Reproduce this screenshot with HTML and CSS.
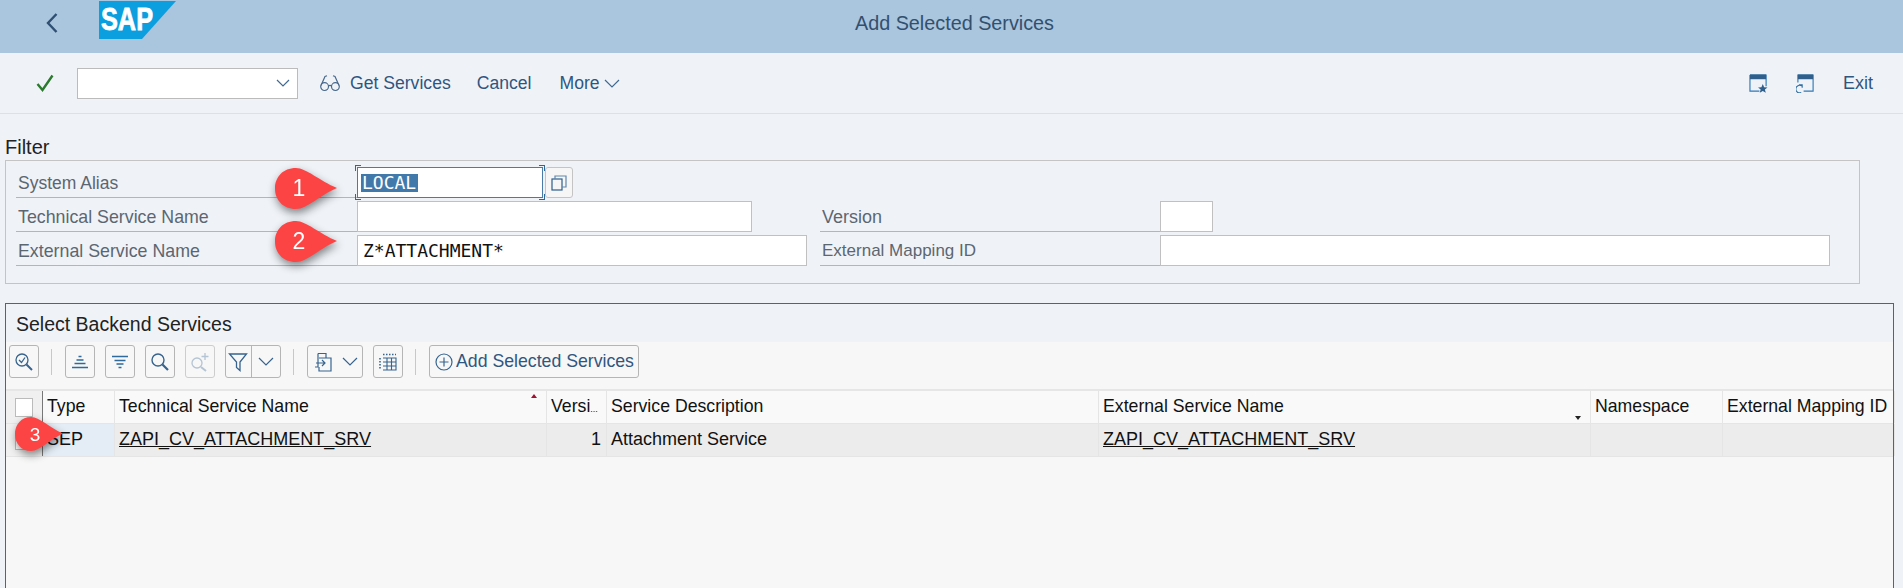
FILE: index.html
```html
<!DOCTYPE html>
<html>

<head>
    <title>Add Selected Services</title>
    <link rel="stylesheet" href="styles.css">
</head>

<body>
    <header class="title-bar">
        <svg class="back-icon" viewBox="0 0 12 20" width="12" height="20">
            <path d="M10.5 1 L2 10 L10.5 19" fill="none" stroke="#2f4f73" stroke-width="2.4" />
        </svg>
        <svg class="sap-logo" viewBox="0 0 77 38" width="77" height="38">
            <polygon points="0,0 77,0 43,38 0,38" fill="#0b9fe0" />
            <text x="2" y="29" class="sap-text" textLength="52" lengthAdjust="spacingAndGlyphs">SAP</text>
        </svg>
        <div class="title-text">Add Selected Services</div>
    </header>

    <div class="toolbar">
        <svg class="check-icon" viewBox="0 0 18 18" width="18" height="18">
            <path d="M1.5 10 L6.5 16 L16.5 1.5" fill="none" stroke="#2b7a2e" stroke-width="2.4" />
        </svg>
        <div class="command-box">
            <svg viewBox="0 0 14 8" width="14" height="8">
                <path d="M1 1 L7 7 L13 1" fill="none" stroke="#3f6a94" stroke-width="1.2" />
            </svg>
        </div>
        <svg class="glasses-icon" viewBox="0 0 20 18" width="20" height="18">
            <g fill="none" stroke="#47688c" stroke-width="1.2">
                <circle cx="4.6" cy="12.6" r="3.9" />
                <circle cx="15.4" cy="12.6" r="3.9" />
                <path d="M8.4 12 Q10 10.8 11.6 12" />
                <path d="M1 11.5 L5 2.5 L7 1.8" />
                <path d="M19 11.5 L15 2.5 L13 1.8" />
            </g>
        </svg>
        <span class="tool-link get-services">Get Services</span>
        <span class="tool-link cancel">Cancel</span>
        <span class="tool-link more">More</span>
        <svg class="more-chevron" viewBox="0 0 16 9" width="16" height="9">
            <path d="M1 1 L8 8 L15 1" fill="none" stroke="#3f6a94" stroke-width="1.2" />
        </svg>
        <svg class="window-icon star-window" viewBox="0 0 20 20" width="19" height="19">
            <path d="M1 1 H18 V13 M1 1 V18 H11" fill="none" stroke="#2f78b8" stroke-width="1.2" />
            <rect x="1" y="0.5" width="17" height="5" fill="#2f5f8a" />
            <polygon points="14.5,10.5 15.9,14 19.5,14.2 16.7,16.3 17.7,19.7 14.5,17.8 11.3,19.7 12.3,16.3 9.5,14.2 13.1,14" fill="#2f5f8a" />
        </svg>
        <svg class="window-icon" viewBox="0 0 20 20" width="19" height="19">
            <path d="M2 9 V1 H18 V18 H8" fill="none" stroke="#2f78b8" stroke-width="1.2" />
            <rect x="2" y="0.5" width="16" height="5" fill="#2f5f8a" />
            <path d="M6 12.5 A4 4 0 1 0 5.5 19.5 M3 11.5 H6.5 V14.5" fill="none" stroke="#2f6ea5" stroke-width="1.2" />
        </svg>
        <span class="tool-link exit">Exit</span>
    </div>

    <main class="content">
        <div class="section-title">Filter</div>
        <section class="filter-box">
            <div class="filter-row">
                <label class="field-label alias-label">System Alias</label>
                <div class="alias-field">
                    <span class="selected-text">LOCAL</span>
                    <i class="corner top-left"></i>
                    <i class="corner top-right"></i>
                    <i class="corner bottom-left"></i>
                    <i class="corner bottom-right"></i>
                </div>
                <button class="copy-button">
                    <svg viewBox="0 0 16 16" width="16" height="16">
                        <rect x="1" y="4" width="10" height="11" fill="none" stroke="#2f5f8a" stroke-width="1.2" />
                        <path d="M4 4 V1 H15 V12 H11" fill="none" stroke="#5f87ad" stroke-width="1.2" />
                    </svg>
                </button>
            </div>
            <div class="filter-row">
                <label class="field-label">Technical Service Name</label>
                <div class="field tech-field"></div>
                <label class="field-label right-label version-label">Version</label>
                <div class="field version-field"></div>
            </div>
            <div class="filter-row">
                <label class="field-label">External Service Name</label>
                <div class="field ext-field">Z*ATTACHMENT*</div>
                <label class="field-label right-label mapping-label">External Mapping ID</label>
                <div class="field mapping-field"></div>
            </div>
        </section>

        <section class="backend-panel">
            <div class="panel-title">Select Backend Services</div>
            <div class="table-tools">
                <button class="icon-btn first-btn">
                    <svg viewBox="0 0 20 20" width="20" height="20">
                        <g fill="none" stroke="#36648f" stroke-width="1.3">
                            <circle cx="8" cy="8" r="6" />
                            <path d="M5 8 L7.5 10.5 L11 5.5" />
                            <path d="M12.5 12.5 L18 18" stroke-width="2" />
                        </g>
                    </svg>
                </button>
                <span class="tool-sep"></span>
                <button class="icon-btn">
                    <svg viewBox="0 0 20 20" width="20" height="20">
                        <path d="M8.5 4.5 H11.5 M6.5 8 H13.5 M4.5 11.5 H15.5 M2 15.5 H18" fill="none" stroke="#2f6a9c" stroke-width="1.3" />
                    </svg>
                </button>
                <button class="icon-btn">
                    <svg viewBox="0 0 20 20" width="20" height="20">
                        <path d="M2 4.5 H18 M4.5 8.5 H15.5 M6.5 12 H13.5 M8.5 15.5 H11.5" fill="none" stroke="#2f6a9c" stroke-width="1.3" />
                    </svg>
                </button>
                <button class="icon-btn">
                    <svg viewBox="0 0 20 20" width="20" height="20">
                        <g fill="none" stroke="#36648f" stroke-width="1.4">
                            <circle cx="8" cy="8" r="6" />
                            <path d="M12.5 12.5 L18 18" stroke-width="2.2" />
                        </g>
                    </svg>
                </button>
                <button class="icon-btn disabled-btn">
                    <svg viewBox="0 0 20 20" width="20" height="20">
                        <g fill="none" stroke="#b4c4d4" stroke-width="1.3">
                            <circle cx="7" cy="11" r="5" />
                            <path d="M11 15 L16 19" stroke-width="2" />
                            <path d="M15 1 V8 M11.5 4.5 H18.5" />
                        </g>
                    </svg>
                </button>
                <div class="split-btn filter-split">
                    <span>
                        <svg viewBox="0 0 20 20" width="20" height="20">
                            <path d="M1.5 2 H18.5 L12 10 V18.5 L8.5 15.5 V10 Z" fill="none" stroke="#36648f" stroke-width="1.3" />
                        </svg>
                    </span>
                    <span class="split-part">
                        <svg viewBox="0 0 16 9" width="16" height="9">
                            <path d="M1 1 L8 8 L15 1" fill="none" stroke="#36648f" stroke-width="1.2" />
                        </svg>
                    </span>
                </div>
                <span class="tool-sep"></span>
                <div class="split-btn export-split">
                    <span>
                        <svg viewBox="0 0 20 20" width="20" height="20">
                            <g fill="none" stroke="#36648f" stroke-width="1.2">
                                <path d="M5 1.5 H13 V6 M5 1.5 V15 H2" />
                                <path d="M6 6 H18 V19 H6 V15" />
                                <path d="M3 11 H12 M9 8 L12 11 L9 14" />
                            </g>
                        </svg>
                    </span>
                    <span>
                        <svg viewBox="0 0 16 9" width="16" height="9">
                            <path d="M1 1 L8 8 L15 1" fill="none" stroke="#36648f" stroke-width="1.2" />
                        </svg>
                    </span>
                </div>
                <button class="icon-btn">
                    <svg viewBox="0 0 20 20" width="20" height="20">
                        <g fill="none" stroke="#36648f" stroke-width="1.1">
                            <path d="M5 6 H18 V18 H5 M5 10 H18 M5 14 H18 M9 6 V18 M13.5 6 V18" />
                            <path d="M2 6 V18" stroke-dasharray="1.5 1.5" stroke-width="1.6" />
                            <path d="M5 2.5 H18" stroke-dasharray="1.5 1.5" stroke-width="1.6" />
                        </g>
                    </svg>
                </button>
                <span class="tool-sep"></span>
                <button class="add-btn">
                    <svg viewBox="0 0 18 18" width="18" height="18">
                        <g fill="none" stroke="#36648f" stroke-width="1.2">
                            <circle cx="9" cy="9" r="8" />
                            <path d="M9 4.5 V13.5 M4.5 9 H13.5" />
                        </g>
                    </svg>
                    Add Selected Services
                </button>
            </div>

            <div class="services-table">
                <div class="table-row head-row">
                    <div class="cell select-cell"><span class="checkbox"></span></div>
                    <div class="cell">Type</div>
                    <div class="cell sorted-up">Technical Service Name</div>
                    <div class="cell">Versi<small>...</small></div>
                    <div class="cell">Service Description</div>
                    <div class="cell sorted-down">External Service Name</div>
                    <div class="cell">Namespace</div>
                    <div class="cell">External Mapping ID</div>
                </div>
                <div class="table-row data-row">
                    <div class="cell select-cell"><span class="checkbox"></span></div>
                    <div class="cell type-cell">SEP</div>
                    <div class="cell link-cell">ZAPI_CV_ATTACHMENT_SRV</div>
                    <div class="cell num-cell">1</div>
                    <div class="cell">Attachment Service</div>
                    <div class="cell link-cell">ZAPI_CV_ATTACHMENT_SRV</div>
                    <div class="cell"></div>
                    <div class="cell"></div>
                </div>
            </div>
        </section>
    </main>

    <!-- callouts sit on top of the screen -->
    <div class="callout callout-one">
        <svg viewBox="0 0 62 41" width="62" height="41">
            <path d="M21 0 C31 0 45 13 62 20 C45 27 32 41 21 41 C8 41 0 32 0 20.5 C0 9 8 0 21 0 Z" fill="#fc4444" />
        </svg>
        <span>1</span>
    </div>
    <div class="callout callout-two">
        <svg viewBox="0 0 62 41" width="62" height="41">
            <path d="M21 0 C31 0 45 13 62 20 C45 27 32 41 21 41 C8 41 0 32 0 20.5 C0 9 8 0 21 0 Z" fill="#fc4444" />
        </svg>
        <span>2</span>
    </div>
    <div class="callout callout-three">
        <svg viewBox="0 0 62 41" width="48" height="34" preserveAspectRatio="none">
            <path d="M21 0 C31 0 45 13 62 20 C45 27 32 41 21 41 C8 41 0 32 0 20.5 C0 9 8 0 21 0 Z" fill="#fc4444" />
        </svg>
        <span>3</span>
    </div>
</body>

</html>
```

FILE: styles.css
```css
html,
body {
    margin: 0;
    height: 100%;
    overflow: hidden;
}

body {
    position: relative;
    background-color: #eff3f8;
    font-family: "Liberation Sans", Arial, sans-serif;
    font-size: 16px;
    color: #222;
}

button {
    font-family: inherit;
    padding: 0;
    margin: 0;
    cursor: pointer;
}

/* top blue bar */
.title-bar {
    display: flex;
    align-items: flex-start;
    height: 53px;
    background-color: #aac5de;
    position: relative;
}

.back-icon {
    margin: 13px 0 0 46px;
}

.sap-logo {
    margin: 1px 0 0 41px;
}

.sap-text {
    font-family: "Liberation Sans", Arial, sans-serif;
    font-size: 31px;
    font-weight: bold;
    fill: #fff;
    stroke: #fff;
    stroke-width: 0.8px;
}

.title-text {
    flex: 1;
    text-align: center;
    line-height: 46px;
    font-size: 19.8px;
    color: #32506e;
    margin-left: -170px;
}

/* command toolbar */
.toolbar {
    display: flex;
    align-items: center;
    height: 60px;
    border-bottom: 1px solid #d8e1ec;
}

.check-icon {
    margin-left: 36px;
}

.command-box {
    display: flex;
    align-items: center;
    justify-content: flex-end;
    box-sizing: border-box;
    width: 221px;
    height: 31px;
    margin-left: 23px;
    padding-right: 7px;
    background-color: #fff;
    border: 1px solid #bbb;
}

.glasses-icon {
    margin-left: 22px;
}

.tool-link {
    color: #30567f;
    font-size: 17.6px;
}

.get-services {
    margin-left: 10px;
}

.cancel {
    margin-left: 26px;
}

.more {
    margin-left: 28px;
}

.more-chevron {
    margin-left: 4px;
}

.star-window {
    margin-left: auto;
}

.window-icon+.window-icon {
    margin-left: 28px;
}

.exit {
    margin: 0 30px 0 28px;
    font-size: 18px;
}

/* filter area */
.content {
    padding: 0 9px 0 5px;
}

.section-title {
    font-size: 20px;
    line-height: 24px;
    margin-top: 21px;
}

.filter-box {
    box-sizing: border-box;
    height: 124px;
    margin: 1px 34px 0 0;
    padding: 6px 10px 0 10px;
    border: 1px solid #c4c4c4;
}

.filter-row {
    display: flex;
    height: 31px;
    margin-bottom: 3px;
}

.field-label {
    box-sizing: border-box;
    width: 341px;
    height: 31px;
    padding-left: 2px;
    font-size: 17.8px;
    line-height: 32px;
    color: #5c6670;
    border-bottom: 1px solid #b5b5b5;
    white-space: nowrap;
}

.alias-label {
    font-size: 17.5px;
}

.right-label {
    width: 340px;
    margin-left: 14px;
}

.version-label {
    font-size: 18px;
}

.mapping-label {
    margin-left: 13px;
    font-size: 17px;
}

.field {
    box-sizing: border-box;
    height: 31px;
    padding-left: 5px;
    background-color: #fff;
    border: 1px solid #c0c0c0;
    font-family: "DejaVu Sans Mono", monospace;
    font-size: 18px;
    line-height: 29px;
    color: #111;
}

.tech-field {
    width: 395px;
    margin-right: 54px;
}

.ext-field {
    width: 450px;
}

.version-field {
    width: 53px;
}

.mapping-field {
    width: 670px;
}

.alias-field {
    position: relative;
    box-sizing: border-box;
    width: 186px;
    height: 31px;
    padding: 6px 0 0 3px;
    background-color: #fff;
    border: 1px solid #4a7ba6;
    font-family: "DejaVu Sans Mono", monospace;
    font-size: 18px;
    line-height: 18px;
}

.selected-text {
    display: inline-block;
    padding: 0 2px 0 1px;
    background-color: #4279ab;
    color: #fff;
}

.corner {
    position: absolute;
    width: 5px;
    height: 5px;
    border: 0 solid #2f6796;
}

.top-left {
    top: -3px;
    left: -3px;
    border-width: 1px 0 0 1px;
}

.top-right {
    top: -3px;
    right: -3px;
    border-width: 1px 1px 0 0;
}

.bottom-left {
    bottom: -3px;
    left: -3px;
    border-width: 0 0 1px 1px;
}

.bottom-right {
    bottom: -3px;
    right: -3px;
    border-width: 0 1px 1px 0;
}

.copy-button {
    box-sizing: border-box;
    width: 28px;
    height: 31px;
    margin-left: 2px;
    background-color: #f6f6f6;
    border: 1px solid #c4c4c4;
    border-radius: 3px;
    display: flex;
    align-items: center;
    justify-content: center;
}

/* backend services panel */
.backend-panel {
    box-sizing: border-box;
    height: 285px;
    margin: 19px 0 0 0;
    background-color: #f7f7f7;
    border: 1px solid #3a6a96;
    border-bottom: none;
}

.panel-title {
    height: 38px;
    padding-left: 10px;
    line-height: 40px;
    font-size: 19.5px;
    color: #222;
    background-color: #eff3f8;
}

.table-tools {
    display: flex;
    align-items: center;
    height: 47px;
    padding: 0 0 8px 3px;
    box-sizing: border-box;
}

.icon-btn {
    box-sizing: border-box;
    display: flex;
    align-items: center;
    justify-content: center;
    width: 30px;
    height: 33px;
    margin-right: 10px;
    background-color: #f7f7f7;
    border: 1px solid #b5b5b5;
    border-radius: 3px;
}

.disabled-btn {
    border-color: #cdcdcd;
}

.tool-sep {
    width: 1px;
    height: 26px;
    margin: 0 13px 0 2px;
    background-color: #c8c8c8;
}

.split-btn {
    box-sizing: border-box;
    display: flex;
    height: 33px;
    margin-right: 10px;
    border: 1px solid #b5b5b5;
    border-radius: 3px;
}

.split-btn span {
    display: flex;
    align-items: center;
    justify-content: center;
}

.filter-split {
    width: 56px;
}

.filter-split span {
    width: 25px;
}

.filter-split .split-part {
    width: 29px;
    border-left: 1px solid #b5b5b5;
}

.export-split {
    width: 56px;
}

.export-split span {
    width: 30px;
}

.export-split span+span {
    width: 24px;
}

.add-btn {
    box-sizing: border-box;
    display: flex;
    align-items: center;
    gap: 3px;
    width: 210px;
    height: 33px;
    padding-left: 5px;
    background-color: #f7f7f7;
    border: 1px solid #b5b5b5;
    border-radius: 3px;
    color: #30567f;
    font-size: 17.7px;
    white-space: nowrap;
}

/* table */
.services-table {
    border-top: 2px solid #e6e6e6;
}

.table-row {
    display: grid;
    grid-template-columns: 37px 72px 432px 60px 492px 492px 132px 172px;
    border-bottom: 1px solid #e5e5e5;
}

.head-row {
    height: 32px;
    background-color: #f9f9f9;
}

.head-row .cell {
    font-size: 17.7px;
    line-height: 31px;
}

.data-row {
    height: 32px;
    background-color: #ececec;
}

.cell {
    position: relative;
    box-sizing: border-box;
    padding-left: 4px;
    font-size: 18px;
    line-height: 30px;
    white-space: nowrap;
    overflow: hidden;
    color: #111;
    border-right: 1px solid #e5e5e5;
}

.cell small {
    font-size: 9px;
}

.select-cell {
    display: flex;
    align-items: center;
    justify-content: center;
    padding: 0 1px 0 0;
    background-color: #f0f0f0;
    border-right: 1px solid #777;
}

.checkbox {
    box-sizing: border-box;
    width: 18px;
    height: 19px;
    background-color: #fff;
    border: 1px solid #bbb;
}

.type-cell {
    background-color: #e4edf6;
}

.link-cell {
    text-decoration: underline;
}

.num-cell {
    padding-right: 5px;
    text-align: right;
}

.sorted-up::after,
.sorted-down::after {
    content: "";
    position: absolute;
    right: 9px;
    border-left: 3px solid transparent;
    border-right: 3px solid transparent;
}

.sorted-up::after {
    top: 3px;
    border-bottom: 4px solid #a01030;
}

.sorted-down::after {
    bottom: 3px;
    border-top: 4px solid #222;
}

/* red numbered callouts */
.callout {
    position: absolute;
    filter: drop-shadow(1px 4px 4px rgba(0, 0, 0, 0.45));
}

.callout svg {
    display: block;
}

.callout span {
    position: absolute;
    top: 0;
    left: 0;
    width: 48px;
    line-height: 41px;
    text-align: center;
    color: #fff;
    font-size: 23px;
}

.callout-one {
    left: 275px;
    top: 168px;
}

.callout-two {
    left: 275px;
    top: 221px;
}

.callout-three {
    left: 15px;
    top: 417px;
}

.callout-three span {
    width: 40px;
    line-height: 36px;
    font-size: 19px;
}
```
